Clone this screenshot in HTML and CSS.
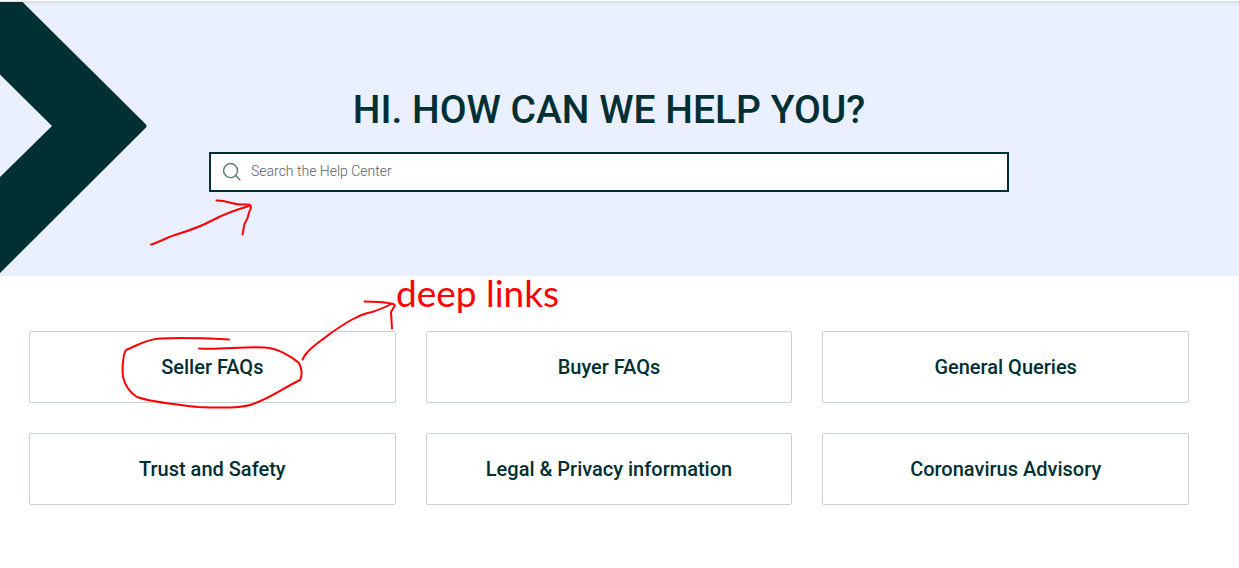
FILE: index.html
```html
<!DOCTYPE html>
<html lang="en">
<head>
<meta charset="utf-8">
<meta name="viewport" content="width=device-width, initial-scale=1">
<title>Help Center</title>
<link rel="stylesheet" href="styles.css">
</head>
<body>
<header class="hero">
  <svg class="hero-chevron" width="147" height="274" viewBox="0 0 147 274" aria-hidden="true">
    <path d="M0 0H22.500L146 122.500Q147 124 146 125.500L0 271V175L52 124L0 72.500Z" fill="#003034"/>
  </svg>
  <div class="hero-content">
    <h1 class="hero-title">HI. HOW CAN WE HELP YOU?</h1>
    <form class="search" role="search">
      <svg class="search-icon" width="18" height="18" viewBox="0 0 18 18" aria-hidden="true">
        <circle cx="7.600" cy="7.600" r="7"/>
        <path d="M12.600 12.600L17.300 17.300"/>
      </svg>
      <input class="search-input" type="search" placeholder="Search the Help Center" aria-label="Search the Help Center">
    </form>
  </div>
</header>
<main class="topics">
  <nav class="topic-grid" aria-label="Help topics">
    <a class="topic" href="#seller">Seller FAQs</a>
    <a class="topic" href="#buyer">Buyer FAQs</a>
    <a class="topic" href="#general">General Queries</a>
    <a class="topic" href="#trust">Trust and Safety</a>
    <a class="topic" href="#legal">Legal &amp; Privacy information</a>
    <a class="topic" href="#coronavirus">Coronavirus Advisory</a>
  </nav>
</main>
<svg class="notes" width="600" height="420" viewBox="0 0 600 420">
  <path d="M151 244.500C158 243 165 238 175 235C188 231 202 226 213 220C226 213 236 210 249 206"/>
  <path d="M216.500 200.500C225 200 229 203 234 203.500C238 205 243 204.500 247 204.500Q251 204 251 208C248 212 249 217 246 221C243 225 244 230 242.500 234.500"/>
  <path d="M229 339.500C210 338.500 180 337.500 160 338.500C147 339 138 345 126 350C123 354 122 368 123 377C125 385 129 392 137 397C150 402 173 404 198 407C220 408 240 408 250 405C270 399 283 388 300 380C303 374 302 369 299 363C291 356 277 348 265 347.500C245 346 220 350 199 348.500"/>
  <path d="M302.500 359.500C307 349 321 341 331 333C344 324 357 315 372 312C381 309 384 308 391 304"/>
  <path d="M364.500 301.500C373 302 384 301 393 304Q396 305 394 307L391 312L392 328.500"/>
  <text class="notes-text" x="396" y="307">deep links</text>
</svg>
</body>
</html>
```

FILE: styles.css
```css
* {
  box-sizing: border-box;
}

body {
  position: relative;
  margin: 0;
  background: #fff;
  color: #003034;
  font-family: Roboto, "Liberation Sans", sans-serif;
}

.hero {
  display: grid;
  margin-top: 1px;
  padding-right: 21px;
  background: #eaf0ff linear-gradient(#d6dce0, #e1e8f1 2px, #eaf0ff 6px);
}

.hero-chevron {
  grid-area: 1 / 1;
  display: block;
  margin-top: 1px;
}

.hero-content {
  grid-area: 1 / 1;
  display: flex;
  flex-direction: column;
  align-items: center;
  gap: 18px;
  padding: 85px 16px 84px;
}

.hero-title {
  margin: 0;
  font-size: 39px;
  font-weight: 500;
  line-height: 48px;
  text-align: center;
}

.search {
  display: flex;
  align-items: center;
  gap: 10px;
  width: 100%;
  max-width: 800px;
  height: 40px;
  padding: 0 12px;
  border: 2px solid #003034;
  background: #fff;
}

.search-icon {
  flex: none;
  fill: none;
  stroke: #5f747c;
  stroke-width: 1.4;
}

.search-input {
  flex: 1;
  min-width: 0;
  padding: 0 0 2px;
  border: 0;
  outline: 0;
  background: transparent;
  color: #003034;
  font-family: inherit;
  font-size: 14px;
  font-weight: 300;
  line-height: 20px;
  appearance: none;
}

.search-input::placeholder {
  color: #5c6268;
}

.topics {
  padding: 55px 50px 63px 29px;
}

.topic-grid {
  display: grid;
  grid-template-columns: repeat(3, 1fr);
  gap: 30px;
  max-width: 1160px;
  margin: 0 auto;
}

.topic {
  display: flex;
  align-items: center;
  justify-content: center;
  min-height: 72px;
  padding: 12px;
  border: 1px solid #c8d2d3;
  border-radius: 2px;
  color: #003034;
  font-size: 20px;
  font-weight: 500;
  line-height: 28px;
  text-align: center;
  text-decoration: none;
}

.notes {
  position: absolute;
  top: 0;
  left: 0;
  fill: none;
  stroke: #f00;
  stroke-width: 2;
  stroke-linecap: round;
  stroke-linejoin: round;
  pointer-events: none;
}

.notes-text {
  fill: #f00;
  stroke: none;
  font-family: Lato, sans-serif;
  font-size: 37px;
}
```
